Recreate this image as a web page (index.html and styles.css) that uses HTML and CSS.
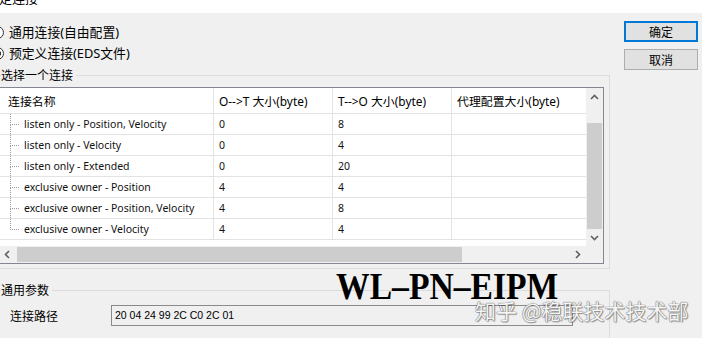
FILE: index.html
```html
<!DOCTYPE html>
<html lang="zh-CN">
<head>
<meta charset="utf-8">
<title>预定义连接</title>
<link rel="stylesheet" href="styles.css">
</head>
<body>
<div class="titlebar"><span class="title">预定连接</span></div>
<div class="dialog">
  <div class="left">
    <div class="radio"><span class="dot"></span><span>通用连接(自由配置)</span></div>
    <div class="radio"><span class="dot on"></span><span>预定义连接(EDS文件)</span></div>

    <div class="group g1">
      <div class="legend"><span>选择一个连接</span></div>
      <div class="list">
        <div class="viewport">
          <div class="row head">
            <div class="c c1 hc">连接名称</div>
            <div class="c c2">O--&gt;T 大小(byte)</div>
            <div class="c c3">T--&gt;O 大小(byte)</div>
            <div class="c c4">代理配置大小(byte)</div>
          </div>
          <div class="row">
            <div class="c c1"><span class="twig"><i></i><i></i></span><span class="name">listen only - Position, Velocity</span></div>
            <div class="c c2">0</div><div class="c c3">8</div><div class="c c4"></div>
          </div>
          <div class="row">
            <div class="c c1"><span class="twig"><i></i><i></i></span><span class="name">listen only - Velocity</span></div>
            <div class="c c2">0</div><div class="c c3">4</div><div class="c c4"></div>
          </div>
          <div class="row">
            <div class="c c1"><span class="twig"><i></i><i></i></span><span class="name">listen only - Extended</span></div>
            <div class="c c2">0</div><div class="c c3">20</div><div class="c c4"></div>
          </div>
          <div class="row">
            <div class="c c1"><span class="twig"><i></i><i></i></span><span class="name">exclusive owner - Position</span></div>
            <div class="c c2">4</div><div class="c c3">4</div><div class="c c4"></div>
          </div>
          <div class="row">
            <div class="c c1"><span class="twig"><i></i><i></i></span><span class="name">exclusive owner - Position, Velocity</span></div>
            <div class="c c2">4</div><div class="c c3">8</div><div class="c c4"></div>
          </div>
          <div class="row">
            <div class="c c1"><span class="twig last"><i></i><i></i></span><span class="name">exclusive owner - Velocity</span></div>
            <div class="c c2">4</div><div class="c c3">4</div><div class="c c4"></div>
          </div>
        </div>
        <div class="vscroll">
          <div class="sbtn"><svg width="9" height="6" viewBox="0 0 9 6"><polyline points="1,5 4.5,1.5 8,5" fill="none" stroke="#606060" stroke-width="1.6"/></svg></div>
          <div class="vtrack-a"></div>
          <div class="vthumb"></div>
          <div class="sbtn"><svg width="9" height="6" viewBox="0 0 9 6"><polyline points="1,1 4.5,4.5 8,1" fill="none" stroke="#606060" stroke-width="1.6"/></svg></div>
        </div>
        <div class="hscroll">
          <div class="sbtn lbtn"><svg width="6" height="9" viewBox="0 0 6 9"><polyline points="5,1 1.5,4.5 5,8" fill="none" stroke="#606060" stroke-width="1.6"/></svg></div>
          <div class="hthumb"></div>
          <div class="htrack"></div>
          <div class="sbtn"><svg width="6" height="9" viewBox="0 0 6 9"><polyline points="1,1 4.5,4.5 1,8" fill="none" stroke="#606060" stroke-width="1.6"/></svg></div>
        </div>
        <div class="corner"></div>
      </div>
    </div>

    <div class="group g2">
      <div class="legend"><span>通用参数</span></div>
      <div class="param">
        <span class="plabel">连接路径</span>
        <div class="pinput">20 04 24 99 2C C0 2C 01</div>
      </div>
    </div>
  </div>

  <div class="right">
    <button class="btn default">确定</button>
    <button class="btn">取消</button>
  </div>
</div>

<div class="wm1">WL–PN–EIPM</div>
<div class="wm2">知乎 @稳联技术技术部</div>
</body>
</html>
```

FILE: styles.css
```css
* {
  box-sizing: border-box;
  margin: 0;
  padding: 0;
}

html,
body {
  width: 702px;
  height: 338px;
  overflow: hidden;
}

body {
  position: relative;
  background: #f0f0f0;
  color: #000;
  font-family: "Noto Sans", "Noto Sans CJK SC", sans-serif;
  font-size: 12px;
}

.titlebar {
  height: 13px;
  background: #fff;
  overflow: hidden;
}

.title {
  display: block;
  font-family: "Noto Sans CJK SC", sans-serif;
  font-size: 13px;
  line-height: 13px;
  margin: -9px 0 0 -14px;
  white-space: nowrap;
}

.dialog {
  display: flex;
  padding-top: 9px;
}

.left {
  flex: none;
  width: 620px;
  margin-left: -10px;
}

.right {
  flex: none;
  display: flex;
  flex-direction: column;
  gap: 7px;
  margin-left: 14px;
  margin-top: -1px;
}

/* radios */
.radio {
  display: flex;
  align-items: center;
  gap: 5px;
  height: 21px;
  padding-left: 1px;
  font-family: "Noto Sans", "Noto Sans CJK SC", sans-serif;
  font-size: 12.8px;
  line-height: 21px;
  white-space: nowrap;
}

.dot {
  flex: none;
  width: 13px;
  height: 13px;
  border: 1px solid #333;
  border-radius: 50%;
  background: #fff;
}

.dot.on {
  background: radial-gradient(circle, #333 0 3.2px, #fff 3.8px);
}

/* group boxes */
.group {
  border: 1px solid #dcdcdc;
  margin-top: 11px;
}

.g2 {
  margin-top: 21px;
  height: 60px;
}

.legend {
  height: 14px;
  line-height: 14px;
  margin: -8px 0 0 10px;
  font-family: "Noto Sans CJK SC", sans-serif;
  font-size: 12px;
}

.legend span {
  background: #f0f0f0;
  padding-right: 3px;
}

/* list view */
.list {
  display: grid;
  grid-template-columns: 589px 17px;
  grid-template-rows: 158px 17px;
  margin: 5px 5px 4px 5px;
  border: 1px solid #828790;
  background: #fff;
}

.viewport {
  overflow: hidden;
  background: #fff;
}

.row {
  display: flex;
  height: 21px;
  border-bottom: 1px solid #e3e3e3;
  font-size: 10.5px;
  color: #111;
  white-space: nowrap;
}

.row.head {
  height: 26px;
  font-size: 11.9px;
  color: #000;
}

.c {
  flex: none;
  display: flex;
  align-items: center;
  border-right: 1px solid #e3e3e3;
  padding-left: 5px;
  overflow: hidden;
}

.c1 {
  width: 217px;
  padding-left: 0;
  align-items: stretch;
}

.c1.hc {
  padding-left: 11px;
  align-items: center;
}

.c2,
.c3 {
  width: 119px;
}

.c4 {
  width: 134px;
  border-right: none;
}

.twig {
  flex: none;
  display: flex;
  flex-direction: column;
  width: 9px;
  margin-left: 13px;
}

.twig i {
  flex: 1;
  border-left: 1px dotted #9a9a9a;
}

.twig i:first-child {
  border-bottom: 1px dotted #9a9a9a;
}

.twig.last i:last-child {
  border-left-color: transparent;
}

.name {
  display: flex;
  align-items: center;
  margin-left: 5px;
}

/* scrollbars */
.vscroll {
  display: flex;
  flex-direction: column;
  background: #f0f0f0;
}

.sbtn {
  flex: none;
  display: flex;
  align-items: center;
  justify-content: center;
  width: 17px;
  height: 17px;
}

.vtrack-a {
  height: 18px;
}

.vthumb {
  height: 106px;
  margin: 0 1px;
  background: #cdcdcd;
}

.hscroll {
  display: flex;
  background: #f0f0f0;
}

.lbtn {
  width: 20px;
}

.hthumb {
  width: 445px;
  margin: 1px 0;
  background: #cdcdcd;
}

.htrack {
  flex: 1;
}

.corner {
  background: #f0f0f0;
}

/* parameters */
.param {
  display: flex;
  align-items: center;
  margin-top: 8px;
}

.plabel {
  width: 101px;
  margin-left: 19px;
  font-family: "Noto Sans CJK SC", sans-serif;
  font-size: 12px;
}

.pinput {
  width: 462px;
  height: 21px;
  border: 1px solid #8a8a8a;
  background: #f0f0f0;
  padding-left: 3px;
  font-family: "Liberation Sans", sans-serif;
  font-size: 10.5px;
  line-height: 19px;
}

/* buttons */
.btn {
  width: 74px;
  height: 21px;
  border: 1px solid #adadad;
  background: #e1e1e1;
  font-family: "Noto Sans CJK SC", sans-serif;
  font-size: 12px;
  color: #000;
}

.btn.default {
  border: 2px solid #0078d7;
}

/* watermarks (overlay) */
.wm1 {
  position: absolute;
  left: 336px;
  top: 267px;
  font-family: "Liberation Serif", serif;
  font-weight: bold;
  font-size: 38px;
  line-height: 38px;
  white-space: nowrap;
  transform: scaleX(0.885);
  transform-origin: left center;
}

.wm2 {
  position: absolute;
  left: 475px;
  top: 299px;
  font-family: "Noto Sans CJK SC", sans-serif;
  font-size: 21px;
  line-height: 22px;
  color: #f4f4f4;
  white-space: nowrap;
  text-shadow: 0 0 1px #666, 0 0 1px #666, 1px 1px 1px rgba(0, 0, 0, 0.35);
}
```
